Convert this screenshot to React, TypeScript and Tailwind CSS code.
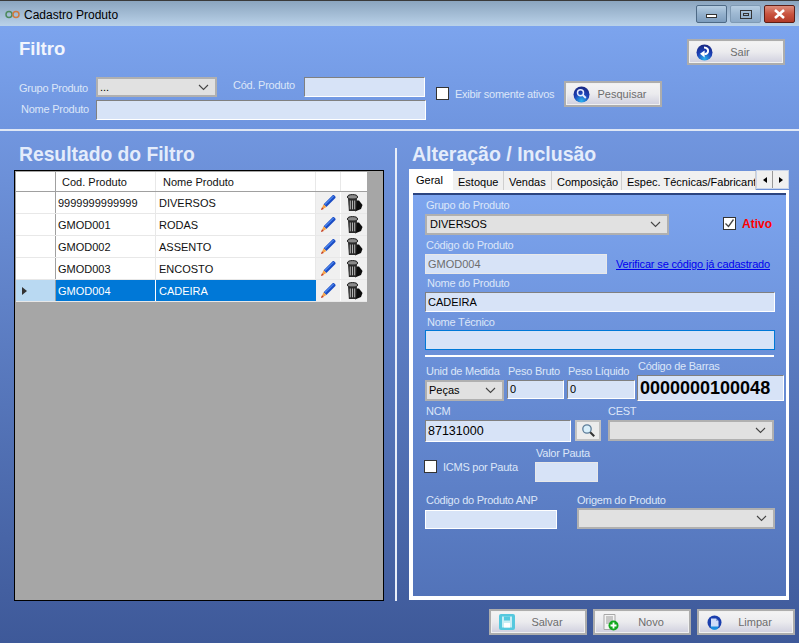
import type { ReactNode } from 'react'

const labelColor = 'text-[#dce6f8]'
const sunken = 'border-t-[#808080] border-l-[#808080] border-r-white border-b-white'

const rows = [
  { code: '9999999999999', name: 'DIVERSOS' },
  { code: 'GMOD001', name: 'RODAS' },
  { code: 'GMOD002', name: 'ASSENTO' },
  { code: 'GMOD003', name: 'ENCOSTO' },
  { code: 'GMOD004', name: 'CADEIRA', selected: true },
]

const tabs = [
  { label: 'Estoque', width: 'w-[51px]' },
  { label: 'Vendas', width: 'w-[48px]' },
  { label: 'Composição', width: 'w-[70px]' },
  { label: 'Espec. Técnicas/Fabricante', width: 'w-[134px]' },
]

function Chevron({ className = 'text-[#444]' }: { className?: string }) {
  return (
    <svg width="11" height="7" viewBox="0 0 11 7" className={className}>
      <path d="M1 1l4.5 4.5L10 1" fill="none" stroke="currentColor" strokeWidth="1.1" />
    </svg>
  )
}

function Select({ value, className }: { value?: string; className: string }) {
  return (
    <div className={`flex items-center justify-between border-2 border-[#b0b0b0] bg-[#e1e1e1] pl-[2px] pr-[6px] text-[11px] text-black ${className}`}>
      <span>{value}</span>
      <Chevron />
    </div>
  )
}

function Input({ value, className, border = 'border-white', text = 'text-black' }: { value?: string; className: string; border?: string; text?: string }) {
  return <div className={`flex items-center overflow-hidden border bg-[#d7e3f7] pl-[2px] text-[11px] ${border} ${text} ${className}`}>{value}</div>
}

function Label({ children, className = '' }: { children: ReactNode; className?: string }) {
  return <div className={`h-[14px] whitespace-nowrap text-[11px] leading-[14px] tracking-[-0.25px] ${labelColor} ${className}`}>{children}</div>
}

function Checkbox({ checked }: { checked?: boolean }) {
  return (
    <div className="grid h-[13px] w-[13px] shrink-0 place-items-center border border-[#333] bg-white">
      {checked && (
        <svg width="11" height="11" viewBox="0 0 11 11">
          <path d="M1.5 5.5l3 3 5-7" fill="none" stroke="#444" strokeWidth="1.3" />
        </svg>
      )}
    </div>
  )
}

function Orb({ children, id }: { children: ReactNode; id: string }) {
  return (
    <svg width="17" height="17" viewBox="0 0 17 17">
      <defs>
        <radialGradient id={id} cx="0.5" cy="0.9" r="0.9">
          <stop offset="0" stopColor="#29b4f0" />
          <stop offset="0.55" stopColor="#1c3fb5" />
          <stop offset="1" stopColor="#18277f" />
        </radialGradient>
      </defs>
      <circle cx="8.5" cy="8.5" r="8" fill={`url(#${id})`} />
      {children}
    </svg>
  )
}

const SairIcon = (
  <Orb id="orb-sair">
    <path d="M8 3.5c3 0 4.5 2 4 4.2-.4 1.6-1.8 2.3-3.5 2.3" fill="none" stroke="#fff" strokeWidth="2" />
    <path d="M4 9.8L8.6 6.4v7.2z" fill="#fff" />
  </Orb>
)

const PesquisarIcon = (
  <Orb id="orb-pesq">
    <circle cx="7.5" cy="6.8" r="3" fill="none" stroke="#e6ecff" strokeWidth="1.5" />
    <path d="M9.8 9l3 3" stroke="#e6ecff" strokeWidth="1.8" />
  </Orb>
)

const LimparIcon = (
  <svg width="15" height="15" viewBox="0 0 15 15">
    <circle cx="7.5" cy="7.5" r="7" fill="#1b3fae" />
    <circle cx="7.5" cy="11" r="4" fill="#1aa0e8" opacity="0.8" />
    <path d="M4 3.5h5l2.5 2.5v5.5H4z" fill="#cfdcf8" />
    <path d="M9 3.5L11.5 6H9z" fill="#8ea6dc" />
  </svg>
)

const SalvarIcon = (
  <svg width="16" height="16" viewBox="0 0 16 16">
    <rect width="16" height="16" rx="2" fill="#55c8de" />
    <path d="M3 2.5h10v11H3z" fill="#c9eef4" />
    <path d="M5 2.5h6v4H5z" fill="#55c8de" />
    <path d="M5 9h6v4.5H5z" fill="#ffffff" />
  </svg>
)

const NovoIcon = (
  <svg width="16" height="17" viewBox="0 0 16 17">
    <path d="M1 .5h11v15H1z" fill="#f4f4f4" stroke="#a8a8a8" />
    <path d="M3 3h7M3 5h7M3 7h7M3 9h4" stroke="#9a9a9a" />
    <circle cx="10.5" cy="11.5" r="5" fill="#12a81e" />
    <path d="M10.5 8.5v6M7.5 11.5h6" stroke="#fff" strokeWidth="1.8" />
  </svg>
)

function Pencil() {
  return (
    <svg width="17" height="17" viewBox="0 0 17 17">
      <path d="M3.6 10.2L12.6 1.2c1.2-.8 3.6 1.6 2.8 2.8L6.4 13z" fill="#1a4cc4" />
      <path d="M5 10.5L13.6 2.2" stroke="#4f8af0" strokeWidth="1.1" />
      <path d="M3.6 10.2L6.4 13 1 16z" fill="#f4a34a" />
      <path d="M1 16l1-2.8 1.8 1.8z" fill="#c0392b" />
    </svg>
  )
}

function Trash() {
  return (
    <svg width="17" height="18" viewBox="0 0 17 18">
      <path d="M9 6.5h4l3.5 4.5-1.5 4-6 2.5z" fill="#0c0c0c" />
      <ellipse cx="6.5" cy="3" rx="5" ry="2.4" fill="#8a8a8a" stroke="#1a1a1a" />
      <path d="M2 4.5h9l-.9 12.5H2.9z" fill="#2a2a2a" />
      <path d="M4.3 6.5v8.8M6.5 6.5v8.8M8.7 6.5v8.8" stroke="#b5b5b5" strokeWidth="1" />
    </svg>
  )
}

function ActionButton({ icon, label, textShift = 'pr-[6px]' }: { icon: ReactNode; label: string; textShift?: string }) {
  return (
    <div className="h-[26px] w-[98px] border-2 border-[#adadad] bg-[#f0f0f0] p-[1px]">
      <div className="flex h-full items-center bg-gradient-to-b from-[#f3f3f4] via-[#ebebee] to-[#d2d2e0] pl-[5px]">
        <span className="flex w-[19px] shrink-0 justify-center">{icon}</span>
        <span className={`flex-1 text-center text-[11px] text-[#6d6d6d] ${textShift}`}>{label}</span>
      </div>
    </div>
  )
}

function CaptionButton({ className, children }: { className: string; children: ReactNode }) {
  return <div className={`grid h-[18px] w-[31px] place-items-center rounded-[2px] border ${className}`}>{children}</div>
}

function TitleBar() {
  return (
    <div className="flex h-[26px] items-start justify-between border-t border-t-[#3a3a3a] bg-gradient-to-b from-[#8ba5bf] to-[#bad2e9] pl-[5px] pr-[4px]">
      <div className="flex h-[27px] items-center gap-[4px] text-xs text-black">
        <svg width="15" height="9" viewBox="0 0 15 9">
          <circle cx="4" cy="4.5" r="3" fill="none" stroke="#4d8a5d" strokeWidth="1.5" />
          <circle cx="11" cy="4.5" r="3" fill="none" stroke="#d1793d" strokeWidth="1.5" />
        </svg>
        <span>Cadastro Produto</span>
      </div>
      <div className="mt-[4px] flex gap-[3px]">
        <CaptionButton className="border-[#4e6a86] bg-gradient-to-b from-[#b6cde2] via-[#94b1cd] to-[#7d9dbd]">
          <div className="mt-[4px] h-[4px] w-[11px] border border-[#333] bg-white" />
        </CaptionButton>
        <CaptionButton className="border-[#7f9ab4] bg-gradient-to-b from-[#b6cde2] via-[#9db8d2] to-[#8ca9c6]">
          <div className="grid h-[9px] w-[12px] place-items-center border border-[#333]">
            <div className="h-[3px] w-[6px] border border-[#333]" />
          </div>
        </CaptionButton>
        <CaptionButton className="border-[#5d1e16] bg-gradient-to-b from-[#dc8d7c] via-[#c9533f] to-[#b23a28]">
          <svg width="13" height="10" viewBox="0 0 13 10">
            <path d="M2 1l9 8M11 1l-9 8" stroke="#fff" strokeWidth="2.6" />
          </svg>
        </CaptionButton>
      </div>
    </div>
  )
}

function FilterPanel() {
  return (
    <section className="h-[103px] bg-gradient-to-b from-[#7ca4ee] to-[#6f95df] pl-[19px] pr-[14px] pt-[13px]">
      <div className="flex h-[38px] items-start justify-between">
        <h1 className="text-[18.5px] font-bold leading-[19px] text-[#f1f5fd]">Filtro</h1>
        <ActionButton icon={SairIcon} label="Sair" textShift="pr-[16px]" />
      </div>
      <div className="flex">
        <div className="flex w-[407px] flex-col gap-[3px]">
          <div className="flex h-[20px]">
            <Label className="mt-[4px] w-[77px]">Grupo Produto</Label>
            <Select value="..." className="h-[20px] w-[121px]" />
            <Label className="ml-[16px] mt-[1px] w-[71px]">Cód. Produto</Label>
            <Input className="h-[20px] w-[121px]" border={sunken} />
          </div>
          <div className="flex h-[20px]">
            <Label className="ml-[2px] mt-[2px] w-[75px]">Nome Produto</Label>
            <Input className="h-[20px] w-[330px]" border={sunken} />
          </div>
        </div>
        <div className="ml-[10px] mt-[10px] flex h-[13px] items-center">
          <Checkbox />
          <Label className="ml-[6px] w-[109px]">Exibir somente ativos</Label>
        </div>
        <div className="mt-[4px]">
          <ActionButton icon={PesquisarIcon} label="Pesquisar" />
        </div>
      </div>
    </section>
  )
}

function ResultGrid() {
  return (
    <div className="ml-[14px] h-[431px] w-[370px] border border-black bg-[#a6a6a6] p-[1px]">
      <div className="flex h-[20px] w-[351px] border-b border-b-[#a0a0a0] bg-white text-[11px] text-[#111]">
        <div className="w-[40px] border-r border-r-[#a0a0a0]" />
        <div className="w-[100px] border-r border-r-[#e8e8e8] pl-[6px] leading-[21px]">Cod. Produto</div>
        <div className="w-[160px] border-r border-r-[#e8e8e8] pl-[7px] leading-[21px]">Nome Produto</div>
        <div className="w-[25px] border-r border-r-[#e8e8e8]" />
        <div className="w-[26px]" />
      </div>
      {rows.map((row) => (
        <div className="flex h-[22px] w-[351px] border-b border-b-[#e8e8e8] bg-white text-[11px]" key={row.code}>
          <div className={`flex w-[40px] items-center border-r border-r-[#a0a0a0] pl-[6px] ${row.selected ? 'bg-[#b9d9f2]' : ''}`}>
            {row.selected && <div className="h-0 w-0 border-y-[4px] border-l-[5px] border-y-transparent border-l-[#333]" />}
          </div>
          <div className={`flex w-[100px] items-center border-r pl-[2px] pt-[1px] ${row.selected ? 'border-r-white bg-[#0078d7] text-white' : 'border-r-[#e8e8e8] text-[#111]'}`}>{row.code}</div>
          <div className={`flex w-[160px] items-center pl-[3px] pt-[1px] ${row.selected ? 'bg-[#0078d7] text-white' : 'border-r border-r-[#e8e8e8] text-[#111]'}`}>{row.name}</div>
          <div className="grid w-[25px] place-items-center border-r border-r-white bg-[#f0f0f0]"><Pencil /></div>
          <div className="grid w-[26px] place-items-center bg-[#f0f0f0]"><Trash /></div>
        </div>
      ))}
    </div>
  )
}

function TabStrip() {
  return (
    <div className="flex h-[21px] items-end">
      <div className="z-10 h-[21px] w-[44px] bg-white pl-[7px] pt-[3px] text-[11px] text-black">Geral</div>
      {tabs.map((tab) => (
        <div className={`h-[19px] overflow-hidden whitespace-nowrap border-r border-r-[#cfcfcf] bg-[#f0f0f0] pl-[5px] pt-[3px] text-[11px] text-black ${tab.width}`} key={tab.label}>
          {tab.label}
        </div>
      ))}
      <div className="mb-[1px] flex h-[19px] self-end border border-[#c8d4ea]">
        <div className="grid w-[16px] place-items-center border-r border-r-[#999] bg-[#f0f0f0]">
          <div className="h-0 w-0 border-y-[3.5px] border-r-[4px] border-y-transparent border-r-black" />
        </div>
        <div className="grid w-[15px] place-items-center bg-[#f0f0f0]">
          <div className="h-0 w-0 border-y-[3.5px] border-l-[4px] border-y-transparent border-l-black" />
        </div>
      </div>
    </div>
  )
}

function GeralTab() {
  return (
    <div className="h-[410px] border-[3px] border-b-[4px] border-l-[4px] border-white bg-white">
      <div className="h-full border-t-2 border-t-[#2b4480] bg-gradient-to-b from-[#7ca4ee] to-[#5273b9] pl-[12px] pt-[3px]">
        <Label className="ml-[1px]">Grupo do Produto</Label>
        <div className="mt-[2px] flex h-[21px]">
          <Select value="DIVERSOS" className="w-[244px] pl-[3px]" />
          <div className="ml-[54px] mt-[3px] flex h-[13px] items-center">
            <Checkbox checked />
            <span className="ml-[6px] text-xs font-bold text-[#ff0000]">Ativo</span>
          </div>
        </div>
        <Label className="ml-[1px] mt-[3px]">Código do Produto</Label>
        <div className="mt-[2px] flex h-[20px] items-center">
          <Input value="GMOD004" className="h-[20px] w-[182px]" border="border-[#e8e8e8]" text="text-[#6d6d6d]" />
          <a className="ml-[9px] whitespace-nowrap text-[11px] tracking-[-0.15px] text-[#0000ee] underline">Verificar se código já cadastrado</a>
        </div>
        <Label className="ml-[2px] mt-[2px]">Nome do Produto</Label>
        <Input value="CADEIRA" className="mt-[2px] h-[20px] w-[350px]" border={sunken} />
        <Label className="ml-[2px] mt-[3px]">Nome Técnico</Label>
        <Input className="mt-[1px] h-[20px] w-[350px]" border="border-[#0078d7]" />
        <div className="mt-[5px] h-[2px] w-[349px] bg-white" />
        <div className="flex">
          <div className="mt-[7px] w-[82px]">
            <Label className="ml-[1px]">Unid de Medida</Label>
            <Select value="Peças" className="mt-[2px] h-[21px] w-[79px] pl-[2px]" />
          </div>
          <div className="mt-[7px] w-[60px]">
            <Label className="ml-[1px]">Peso Bruto</Label>
            <Input value="0" className="mt-[2px] h-[19px] w-[57px]" border={sunken} />
          </div>
          <div className="mt-[7px] w-[70px]">
            <Label className="ml-[1px]">Peso Líquido</Label>
            <Input value="0" className="mt-[2px] h-[19px] w-[68px]" border={sunken} />
          </div>
          <div className="mt-[2px]">
            <Label className="ml-[1px]">Código de Barras</Label>
            <Input value="0000000100048" className="mt-[2px] h-[26px] w-[147px] text-[18px] font-bold" border={sunken} />
          </div>
        </div>
        <div className="mt-[3px] flex">
          <Label className="ml-[1px] w-[182px]">NCM</Label>
          <Label>CEST</Label>
        </div>
        <div className="mt-[2px] flex h-[22px]">
          <Input value="87131000" className="h-[22px] w-[146px] text-[12.5px]" border={sunken} />
          <div className="ml-[4px] grid h-[21px] w-[26px] place-items-center border-2 border-[#c2c2c2] bg-[#ececec]">
            <svg width="15" height="15" viewBox="0 0 15 15">
              <circle cx="6" cy="6" r="4.2" fill="#d9effa" stroke="#5d7d99" strokeWidth="1.3" />
              <path d="M9.2 9.2l4 4" stroke="#333" strokeWidth="2" />
            </svg>
          </div>
          <Select className="ml-[7px] h-[21px] w-[166px]" />
        </div>
        <div className="flex">
          <div className="ml-[-1px] mt-[18px] flex h-[13px] w-[111px] items-center">
            <Checkbox />
            <Label className="ml-[6px]">ICMS por Pauta</Label>
          </div>
          <div className="mt-[4px]">
            <Label className="ml-[1px]">Valor Pauta</Label>
            <Input className="mt-[2px] h-[20px] w-[63px]" border="border-[#e8e8e8]" />
          </div>
        </div>
        <div className="mt-[11px] flex">
          <div className="w-[152px]">
            <Label className="ml-[1px]">Código do Produto ANP</Label>
            <Input className="mt-[3px] h-[19px] w-[132px]" />
          </div>
          <div>
            <Label>Origem do Produto</Label>
            <Select className="mt-[1px] h-[21px] w-[198px]" />
          </div>
        </div>
      </div>
    </div>
  )
}

export default function App() {
  return (
    <div className="flex h-[643px] w-[799px] flex-col overflow-hidden font-['Liberation_Sans',Arial,sans-serif]">
      <TitleBar />
      <FilterPanel />
      <div className="flex h-[514px] flex-col border-t-2 border-t-[#dfe7f5] bg-gradient-to-b from-[#7196df] to-[#3e5999]">
        <div className="flex h-[469px]">
          <div className="w-[395px] pt-[14px]">
            <h2 className="mb-[6px] ml-[19px] h-[19px] text-[19.3px] font-bold leading-[19px] text-[#e4ecfb]">Resultado do Filtro</h2>
            <ResultGrid />
          </div>
          <div className="mt-[17px] h-[453px] w-[2px] bg-[#e8eef9]" />
          <div className="ml-[12px] w-[380px] pt-[14px]">
            <h2 className="mb-[5px] ml-[3px] h-[19px] whitespace-nowrap text-[19.5px] font-bold leading-[19px] text-[#e4ecfb]">Alteração / Inclusão</h2>
            <TabStrip />
            <GeralTab />
          </div>
        </div>
        <div className="mt-[9px] flex justify-end gap-[6px] pr-[4px]">
          <ActionButton icon={SalvarIcon} label="Salvar" />
          <ActionButton icon={NovoIcon} label="Novo" />
          <ActionButton icon={LimparIcon} label="Limpar" />
        </div>
      </div>
    </div>
  )
}
